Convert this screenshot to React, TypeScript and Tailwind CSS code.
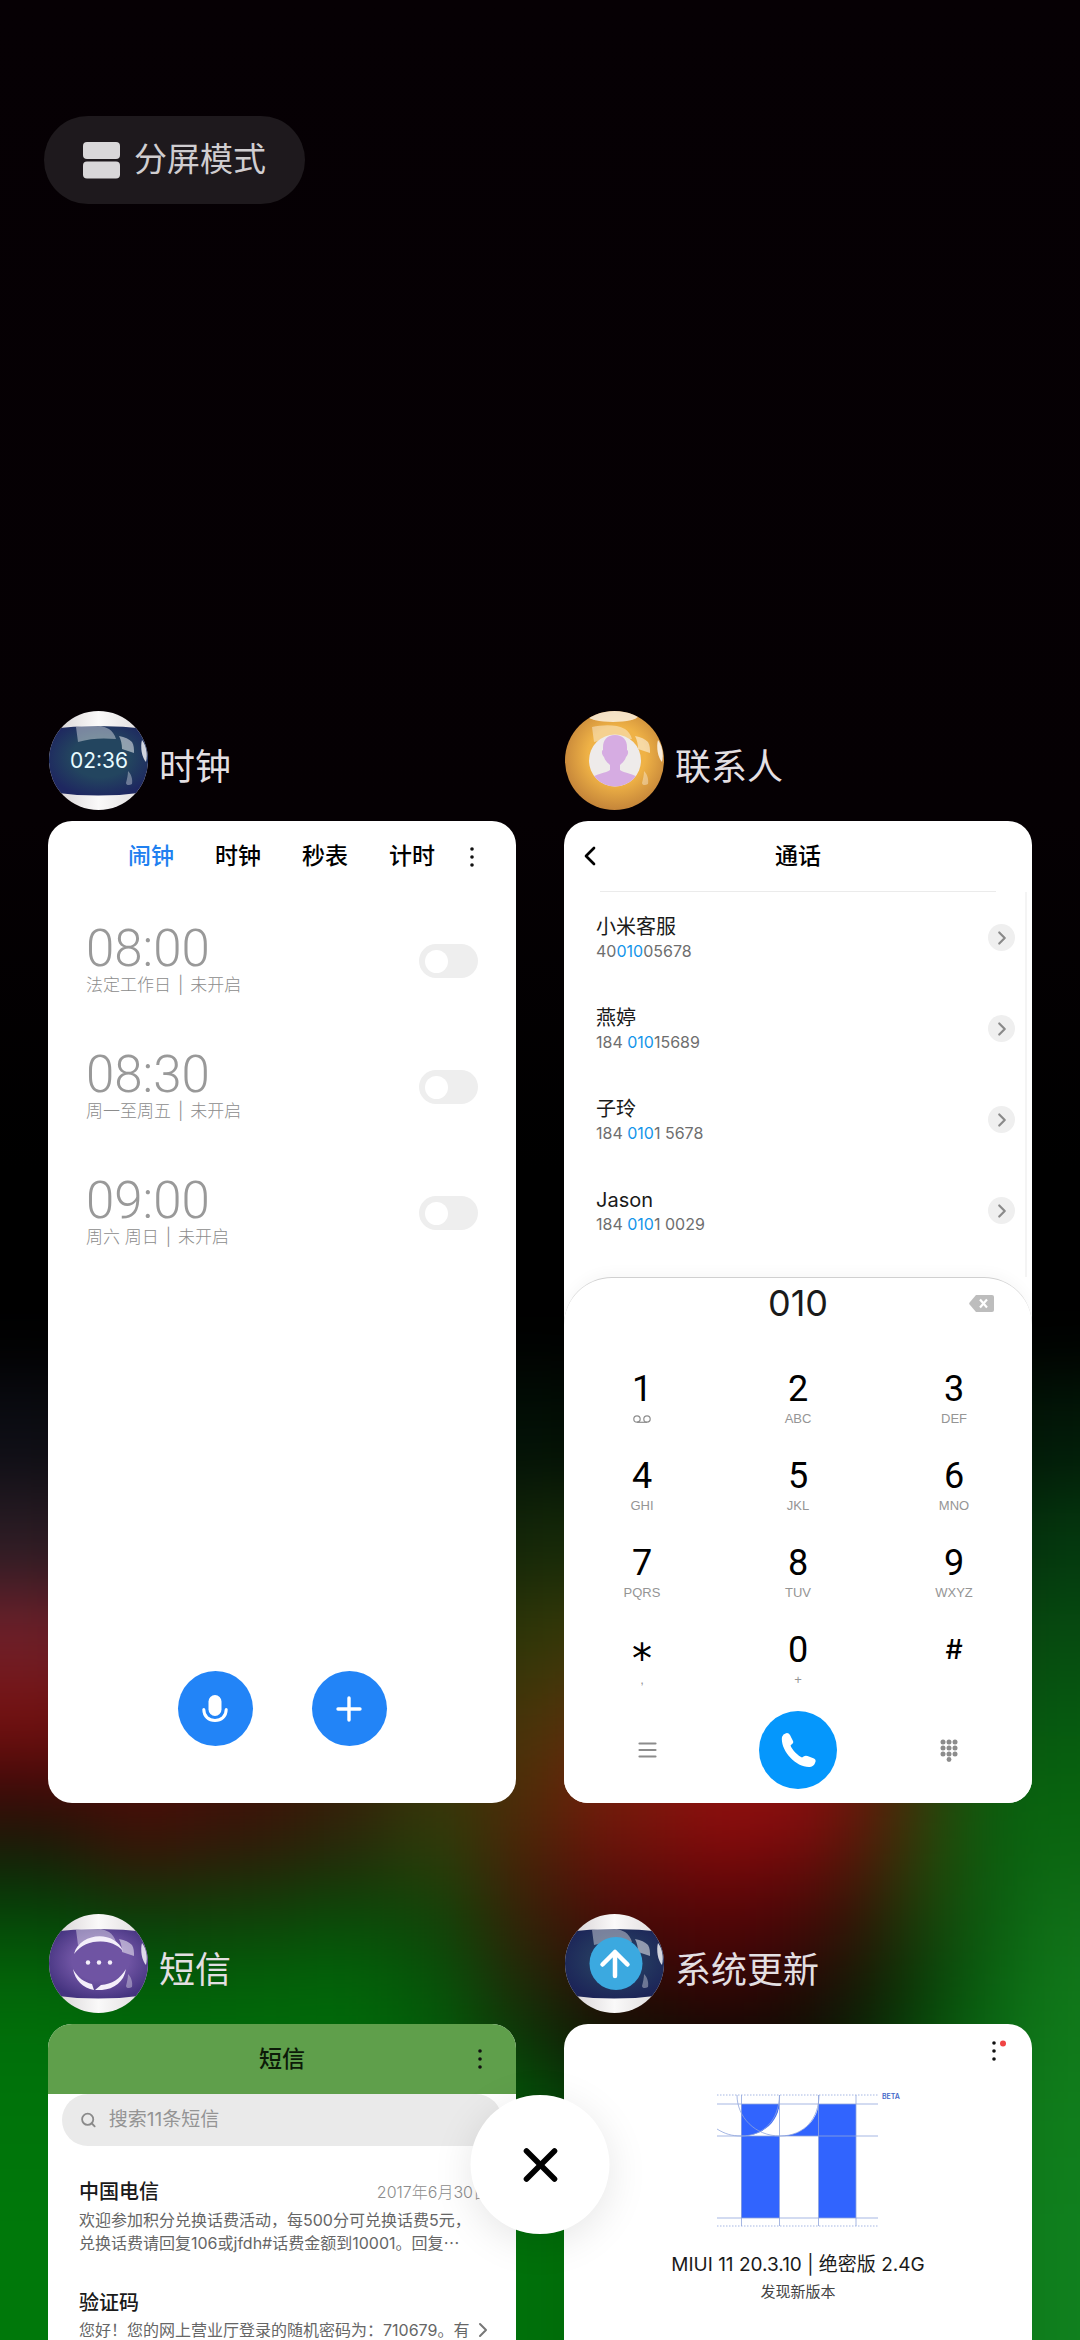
import type { ReactNode } from "react";
import { ChevronLeft, ChevronRight, Search, X } from "lucide-react";

type Alarm = { id: string; time: string; days: string };
type Contact = { name: string; number: [string, string, string] };
type Key = { digit: string; sub: ReactNode; className?: string };

const alarms: Alarm[] = [
  { id: "a1", time: "08:00", days: "法定工作日" },
  { id: "a2", time: "08:30", days: "周一至周五" },
  { id: "a3", time: "09:00", days: "周六 周日" },
];

const contacts: Contact[] = [
  { name: "小米客服", number: ["40", "010", "05678"] },
  { name: "燕婷", number: ["184 ", "010", "15689"] },
  { name: "子玲", number: ["184 ", "010", "1 5678"] },
  { name: "Jason", number: ["184 ", "010", "1 0029"] },
];

const keys: Key[] = [
  { digit: "1", sub: <VoicemailIcon /> },
  { digit: "2", sub: "ABC" },
  { digit: "3", sub: "DEF" },
  { digit: "4", sub: "GHI" },
  { digit: "5", sub: "JKL" },
  { digit: "6", sub: "MNO" },
  { digit: "7", sub: "PQRS" },
  { digit: "8", sub: "TUV" },
  { digit: "9", sub: "WXYZ" },
  { digit: "*", sub: ",", className: "h-10 font-['DejaVu_Sans'] text-[40px] leading-[58px] text-black" },
  { digit: "0", sub: "+" },
  { digit: "#", sub: "", className: "text-[27px] leading-10 font-medium text-black" },
];

// Wallpaper colours: column edges, then one row of colours per y edge
const wallX = [-300, 90, 200, 300, 390, 480, 570, 670, 770, 840, 900, 960, 1020, 1400];
const wallRows: [number, string[]][] = [
  [1380, ["#0c0d14", "#080808", "#050505", "#030503", "#020a04", "#021206", "#020a04", "#020502", "#020502", "#020502", "#020a04", "#021206", "#021a08"]],
  [1490, ["#2a1c24", "#201014", "#100808", "#080c04", "#0c1806", "#142808", "#142808", "#140c06", "#140806", "#100c06", "#081808", "#04280a", "#04380e"]],
  [1590, ["#70202a", "#5a181c", "#30100c", "#201008", "#202808", "#303808", "#3c3808", "#401c0a", "#401008", "#30180a", "#182c08", "#08400c", "#064c10"]],
  [1680, ["#76100f", "#5a0e0c", "#40100a", "#381408", "#382c08", "#48360a", "#602c0c", "#70180e", "#70100e", "#50180a", "#28340a", "#085010", "#065a10"]],
  [1760, ["#380808", "#480c08", "#401008", "#38200a", "#36380a", "#502c08", "#7c1a0c", "#94100f", "#900e10", "#601a0a", "#30400a", "#0a600e", "#08640e"]],
  [1830, ["#102208", "#301808", "#28200a", "#202c0a", "#283e0a", "#482008", "#64100a", "#76080a", "#6a0a0a", "#441c08", "#24440a", "#0a5c0e", "#0c6812"]],
  [1890, ["#044808", "#08400a", "#0c4408", "#084c08", "#0e4408", "#342008", "#480a08", "#500406", "#440808", "#281c06", "#18440a", "#0a5c10", "#107018"]],
  [1950, ["#036408", "#035c0a", "#03600a", "#02640a", "#06540a", "#202808", "#2c0c06", "#380606", "#240a06", "#141c06", "#084208", "#0a6010", "#107619"]],
  [2010, ["#00700a", "#006c08", "#006c08", "#006a08", "#035c08", "#0a3608", "#100e04", "#100604", "#0c0c04", "#082806", "#084e0a", "#0a6814", "#107a1a"]],
  [2080, ["#00740a", "#00740a", "#00700a", "#00700a", "#036408", "#035808", "#063808", "#062806", "#062806", "#083808", "#085a0c", "#0c7016", "#107e1c"]],
  [2180, ["#00780a", "#00780a", "#00780a", "#00780a", "#00740a", "#00700a", "#006808", "#006008", "#006008", "#006408", "#08680e", "#0c7618", "#10801e"]],
  [2700, []],
];

function Wallpaper() {
  return (
    <svg className="absolute inset-0 size-full" viewBox="0 0 1080 2340" preserveAspectRatio="none" aria-hidden="true">
      <defs>
        <linearGradient id="night" x1="0" y1="0" x2="0" y2="1">
          <stop offset="0" stopColor="#060004" />
          <stop offset="0.35" stopColor="#050003" />
          <stop offset="0.5" stopColor="#000" />
        </linearGradient>
        <filter id="soft" filterUnits="userSpaceOnUse" x="-300" y="1100" width="1700" height="1600" colorInterpolationFilters="sRGB">
          <feGaussianBlur stdDeviation="36" />
        </filter>
      </defs>
      <rect width="1080" height="2340" fill="url(#night)" />
      <g filter="url(#soft)">
        {wallRows.slice(0, -1).map(([y, colors], r) =>
          colors.map((c, i) => (
            <rect key={`${y}-${i}`} x={wallX[i]} y={y} width={wallX[i + 1] - wallX[i] + 1} height={wallRows[r + 1][0] - y + 1} fill={c} />
          ))
        )}
      </g>
    </svg>
  );
}

function Gloss() {
  return (
    <g fill="#fff">
      <path d="M27 16c10-2 24-3 33 2 3 2 6 6 7 10-12-1-25-1-38 3z" opacity="0.4" />
      <path d="M70 25c6 1 10 3 13 6 2 3 2 7 2 11l-12-4c0-5-1-9-3-13z" opacity="0.5" />
      <path d="M93 29c4 5 6 14 4 22-4-4-6-15-4-22z" opacity="0.8" />
      <path d="M79 60c3 3 5 8 4 13-3 2-6 1-6-1 1-4 2-8 2-12z" opacity="0.35" />
    </g>
  );
}

function Ball({ id, inner, outer, striped, children }: { id: string; inner: string; outer: string; striped?: boolean; children: ReactNode }) {
  return (
    <svg className="size-[99px] shrink-0" viewBox="0 0 99 99" aria-hidden="true">
      <defs>
        <clipPath id={`${id}-clip`}>
          <circle cx="49.5" cy="49.5" r="49.5" />
        </clipPath>
        <radialGradient id={`${id}-fill`} cx="0.52" cy="0.45" r="0.58">
          <stop offset="0" stopColor={inner} />
          <stop offset="0.5" stopColor={inner} />
          <stop offset="1" stopColor={outer} />
        </radialGradient>
        <linearGradient id={`${id}-cap`} x1="0" y1="0" x2="1" y2="0">
          <stop offset="0.1" stopColor="#dad6d8" />
          <stop offset="0.5" stopColor="#faf9f9" />
          <stop offset="0.9" stopColor="#e2dfe0" />
        </linearGradient>
      </defs>
      <g clipPath={`url(#${id}-clip)`}>
        <rect width="99" height="99" fill={striped ? `url(#${id}-cap)` : `url(#${id}-fill)`} />
        {striped ? (
          <path d="M0 18Q49 12 99 18V81Q49 88 0 81z" fill={`url(#${id}-fill)`} />
        ) : (
          <ellipse cx="48" cy="5" rx="25" ry="6" fill="#fff" opacity="0.7" />
        )}
        <Gloss />
        {children}
      </g>
    </svg>
  );
}

function ClockBall() {
  return (
    <Ball id="clock" inner="#23455f" outer="#1e2760" striped>
      <text x="50" y="57" textAnchor="middle" fontFamily="Inter, sans-serif" fontSize="21" fill="#e8fbff">
        02:36
      </text>
    </Ball>
  );
}

function ContactsBall() {
  return (
    <Ball id="contacts" inner="#efb246" outer="#c08038">
      <clipPath id="face">
        <circle cx="50" cy="49.5" r="26" />
      </clipPath>
      <circle cx="50" cy="49.5" r="26" fill="#eeebea" />
      <g clipPath="url(#face)" fill="#d6ace2">
        <path d="M50 24c-8 0-12 5-12 12v3c-2 1-1 5 1 7 1 4 4 6 6 8v5c-3 3-16 4-20 9v12h50V68c-4-5-17-6-20-9v-5c2-2 5-4 6-8 2-2 3-6 1-7v-3c0-7-4-12-12-12z" />
      </g>
    </Ball>
  );
}

function MessagesBall() {
  return (
    <Ball id="messages" inner="#6f54a3" outer="#453480" striped>
      <g fill="#f4effa">
        <path d="M25 40C31 18 66 16 74 37 63 24 38 23 25 40z" />
        <path d="M24 55c5 9 11 13 19 15l2 6c-11-2-19-10-21-21zM52 71c11-1 19-6 25-16-2 13-12 20-24 21h-7z" />
        <circle cx="39" cy="48.5" r="2.2" />
        <circle cx="50" cy="48.5" r="2.2" />
        <circle cx="61" cy="48.5" r="2.2" />
      </g>
    </Ball>
  );
}

function UpdateBall() {
  return (
    <Ball id="update" inner="#24385f" outer="#1c2558" striped>
      <circle cx="51" cy="49.5" r="26.5" fill="#3ba9e0" />
      <path d="M50 62V38M37.5 50.5L50 38l12.5 12.5" fill="none" stroke="#fff" strokeWidth="4.5" strokeLinecap="round" strokeLinejoin="round" />
    </Ball>
  );
}

function VoicemailIcon() {
  return (
    <svg className="h-[10px] w-[20px]" viewBox="0 0 20 10" fill="none" stroke="#8e8e8e" strokeWidth="1.2" aria-hidden="true">
      <circle cx="5" cy="5" r="3.2" />
      <circle cx="15" cy="5" r="3.2" />
      <path d="M5 8.3h10" />
    </svg>
  );
}

function MoreIcon({ alert }: { alert?: boolean }) {
  return (
    <svg className="h-6 w-6" viewBox="0 0 24 24" fill="#111" aria-hidden="true">
      <circle cx="12" cy="4" r="1.8" />
      <circle cx="12" cy="12" r="1.8" />
      <circle cx="12" cy="20" r="1.8" />
      {alert && <circle cx="21" cy="4.5" r="3" fill="#f04444" />}
    </svg>
  );
}

function DeleteIcon() {
  return (
    <svg className="h-[17px] w-[25px]" viewBox="0 0 25 17" aria-hidden="true">
      <path d="M7 0h16q2 0 2 2v13q0 2-2 2H7L.6 9.5q-.8-1 0-2z" fill="#bdbdbd" />
      <path d="M11 4.5l7 8M18 4.500l-7 8" stroke="#fff" strokeWidth="2.2" />
    </svg>
  );
}

function LogoEleven() {
  return (
    <svg className="h-[136px] w-[186px] overflow-visible" viewBox="0 0 186 136" aria-label="MIUI 11">
      <g fill="#3164fe">
        <path d="M24 11h38.5C61 29 46 43 24 43z" />
        <path d="M24 43h38.5v82H24z" />
        <path d="M101.5 11H139v114h-37.5V43H64c20 0 36-14 37.500-32z" />
      </g>
      <g stroke="#8fa4dc" fill="none" strokeWidth="0.8">
        <path d="M0 11h161M0 43h161M0 125h161M24.5 2v131M62.5 2v131M101.5 2v131M139 2v131" />
        <path d="M20 2c0 22 18 41 43 41s39-18 39-41M0 36c8 5 15 7 24 7 23 0 38-16 38.5-41" />
        <path d="M0 2h161M0 133h161" strokeDasharray="1.5 1.5" />
      </g>
      <text x="165" y="6" fontFamily="Inter, sans-serif" fontSize="7" fontWeight="600" fill="#4468c8">
        BETA
      </text>
    </svg>
  );
}

function Task({ icon, title, children }: { icon: ReactNode; title: string; children: ReactNode }) {
  return (
    <section>
      <div className="mb-[11px] flex items-center gap-[11px] pl-px">
        {icon}
        <h2 className="pt-3 text-4xl leading-10 font-normal text-[#e3dfe2]">{title}</h2>
      </div>
      <div className="flex h-[982px] flex-col overflow-hidden rounded-3xl bg-white">{children}</div>
    </section>
  );
}

function ClockCard() {
  return (
    <>
      <div className="flex h-[71px] items-center gap-[41px] pl-20 text-[23px] font-medium text-black">
        <button className="text-[#2080f0]">闹钟</button>
        <button>时钟</button>
        <button>秒表</button>
        <button>计时</button>
        <button className="-ml-4" aria-label="更多">
          <MoreIcon />
        </button>
      </div>
      <ul className="pt-[6px]">
        {alarms.map((a) => (
          <li key={a.id} className="flex h-[126px] items-center justify-between px-[38px] text-[#8c8c8c]">
            <label htmlFor={a.id} className="pb-[3px]">
              <span className="block font-['Roboto'] text-[51px] leading-[52px] font-light text-[#999]">{a.time}</span>
              <span className="block text-[17px] leading-[21px] font-light">
                {a.days}
                <span className="mx-[7px]">|</span>
                未开启
              </span>
            </label>
            <input
              id={a.id}
              type="checkbox"
              role="switch"
              className="flex h-[34px] w-[59px] appearance-none items-center rounded-full bg-[#eeeeee] pl-[6px] before:size-[23px] before:rounded-full before:bg-white checked:bg-[#2080f0]"
            />
          </li>
        ))}
      </ul>
      <div className="mt-auto mb-[57px] flex justify-center gap-[59px]">
        <button className="flex size-[75px] items-center justify-center rounded-full bg-[#2284f7]" aria-label="语音">
          <svg className="h-7 w-[26px]" viewBox="0 0 26 28" fill="none" aria-hidden="true">
            <rect x="6.5" y="0" width="13" height="21" rx="6.5" fill="#fff" />
            <path d="M1.8 14.5c0 7 5 11 11.2 11s11.2-4 11.2-11" stroke="#fff" strokeWidth="3" strokeLinecap="round" />
          </svg>
        </button>
        <button className="flex size-[75px] items-center justify-center rounded-full bg-[#2284f7]" aria-label="添加闹钟">
          <svg className="size-[26px]" viewBox="0 0 26 26" stroke="#fff" strokeWidth="3.4" strokeLinecap="round" aria-hidden="true">
            <path d="M13 2v22M2 13h22" />
          </svg>
        </button>
      </div>
    </>
  );
}

function ContactsCard() {
  return (
    <>
      <div className="mx-9 grid h-[71px] grid-cols-3 items-center border-b border-[#ebebeb]">
        <button className="-ml-[26px] justify-self-start" aria-label="返回">
          <ChevronLeft className="size-8 text-black" strokeWidth={2} />
        </button>
        <h3 className="text-center text-[23px] font-medium">通话</h3>
      </div>
      <ul className="mr-[5px] flex-1 border-r-2 border-[#f4f4f4]">
        {contacts.map((c) => (
          <li key={c.name} className="flex h-[91px] items-center justify-between pr-[10px] pl-8">
            <div>
              <p className="text-xl leading-[26px] text-[#1a1a1a]">{c.name}</p>
              <p className="text-base leading-[22px] whitespace-pre text-[#6e6e6e]">
                {c.number[0]}
                <span className="text-[#1495ea]">{c.number[1]}</span>
                {c.number[2]}
              </p>
            </div>
            <button className="flex size-[27px] items-center justify-center rounded-full bg-[#efefef]" aria-label={`${c.name} 详情`}>
              <ChevronRight className="size-[22px] text-[#8a8a8a]" strokeWidth={2.4} />
            </button>
          </li>
        ))}
      </ul>
      <div className="rounded-t-[48px] border-t border-[#d0d0d0] bg-white shadow-[0_-4px_14px_rgba(0,0,0,0.03)]">
        <div className="grid h-[50px] grid-cols-3 items-center px-9">
          <output className="col-start-2 text-center text-4xl text-[#1a1a1a]">010</output>
          <button className="justify-self-end pr-0.5" aria-label="删除">
            <DeleteIcon />
          </button>
        </div>
        <div className="grid grid-cols-3 gap-y-[27px] pt-[41px]">
          {keys.map((k) => (
            <button key={k.digit} className="flex h-[60px] flex-col items-center">
              <span className={k.className ?? "font-['Roboto'] text-4xl leading-10 text-black"}>{k.digit}</span>
              <span className="flex h-5 items-center font-['Liberation_Sans'] text-[13px] leading-5 text-[#959595]">{k.sub}</span>
            </button>
          ))}
        </div>
        <div className="mt-[21px] mb-[14px] grid grid-cols-3 place-items-center px-2">
          <button aria-label="菜单">
            <svg className="h-[18px] w-[19px]" viewBox="0 0 19 18" stroke="#8c8c8c" strokeWidth="2.2" strokeLinecap="round" aria-hidden="true">
              <path d="M1.5 2.5h16M1.5 9h16M1.5 15.5h16" />
            </svg>
          </button>
          <button className="flex size-[78px] items-center justify-center rounded-full bg-[#0597fc]" aria-label="拨打">
            <svg className="size-9" viewBox="0 0 36 36" fill="#fff" aria-hidden="true">
              <path d="M2 5Q3 2 6 1.200Q8.500.5 10 3l3 6q.8 2-1 3l-1.500 1.600c1.500 4.500 8 10.500 11.500 12l2-1.300q1.500-.9 3.500-.2l6.500 2.500q2.400 1.200 1.300 3.600Q34 34.500 30 35C16 36 0 18 2 5z" />
            </svg>
          </button>
          <button aria-label="键盘">
            <svg className="h-[23px] w-[18px]" viewBox="0 0 18 23" fill="#8c8c8c" aria-hidden="true">
              {[3, 9, 15].map((y) => [3, 9, 15].map((x) => <circle key={`${x}-${y}`} cx={x} cy={y} r="2.5" />))}
              <circle cx="9" cy="20.5" r="2.4" />
            </svg>
          </button>
        </div>
      </div>
    </>
  );
}

function MessagesCard() {
  return (
    <>
      <div className="grid h-[70px] shrink-0 grid-cols-3 items-center bg-[#5f9f4b] px-6">
        <h3 className="col-start-2 text-center text-[23px] font-medium text-[#0c1a08]">短信</h3>
        <button className="justify-self-end" aria-label="更多">
          <MoreIcon />
        </button>
      </div>
      <label className="mx-[14px] flex h-[52px] shrink-0 items-center gap-3 rounded-full bg-[#eaeaea] pl-[18px]">
        <Search className="size-[18px] text-[#8a8a8a]" strokeWidth={2.6} />
        <input type="text" aria-label="搜索短信" placeholder="搜索11条短信" className="w-full bg-transparent text-[19px] placeholder:text-[#949494]" />
      </label>
      <ul className="space-y-[35px] pt-8 pr-[27px] pl-[31px] text-base leading-[22px] text-[#666]">
        <li>
          <div className="mb-[3px] flex h-7 items-center justify-between">
            <h4 className="text-xl font-medium text-[#1a1a1a]">中国电信</h4>
            <time className="font-light text-[#8c8c8c]">2017年6月30日</time>
          </div>
          <p className="whitespace-nowrap">
            欢迎参加积分兑换话费活动，每500分可兑换话费5元，
            <br />
            兑换话费请回复106或jfdh#话费金额到10001。回复
            <span className="font-['Noto_Sans_CJK_SC']">…</span>
          </p>
        </li>
        <li>
          <h4 className="mb-0.5 text-xl leading-7 font-medium text-[#1a1a1a]">验证码</h4>
          <div className="flex h-[22px] items-center justify-between">
            <p className="whitespace-nowrap">您好！您的网上营业厅登录的随机密码为：710679。有</p>
            <ChevronRight className="-mr-1.5 size-6 shrink-0 text-[#777]" />
          </div>
        </li>
      </ul>
    </>
  );
}

function UpdateCard() {
  return (
    <div className="flex flex-col items-center">
      <button className="mt-[15px] mr-[26px] self-end" aria-label="更多">
        <MoreIcon alert />
      </button>
      <div className="mt-[30px] pl-6">
        <LogoEleven />
      </div>
      <h3 className="mt-[22px] text-[19px] leading-7 text-[#1a1a1a]">MIUI 11 20.3.10 | 绝密版 2.4G</h3>
      <p className="text-[15px] leading-[26px] text-[#444]">发现新版本</p>
    </div>
  );
}

export default function App() {
  return (
    <main className="relative h-screen overflow-hidden bg-black font-['Inter','Noto_Sans_CJK_SC',sans-serif]">
      <Wallpaper />
      <div className="relative">
        <header className="px-11 pt-[116px]">
          <button className="flex h-[88px] items-center gap-[14px] rounded-full bg-[#1e191d] pr-[39px] pl-[39px] text-[33px] text-[#d0cdd0]">
            <svg className="size-[37px]" viewBox="0 0 37 37" fill="#d9d7d9" aria-hidden="true">
              <rect width="37" height="17" rx="4" />
              <rect y="19.5" width="37" height="17" rx="4" />
            </svg>
            分屏模式
          </button>
        </header>
        <div className="mt-[507px] grid grid-cols-2 gap-x-12 gap-y-[111px] px-12">
          <Task icon={<ClockBall />} title="时钟">
            <ClockCard />
          </Task>
          <Task icon={<ContactsBall />} title="联系人">
            <ContactsCard />
          </Task>
          <Task icon={<MessagesBall />} title="短信">
            <MessagesCard />
          </Task>
          <Task icon={<UpdateBall />} title="系统更新">
            <UpdateCard />
          </Task>
        </div>
      </div>
      <button
        className="absolute bottom-[106px] left-1/2 flex size-[139px] -translate-x-1/2 items-center justify-center rounded-full bg-white shadow-[0_8px_40px_rgba(0,0,0,0.1)]"
        aria-label="全部清除"
      >
        <X className="size-14 text-black" strokeWidth={2.4} />
      </button>
    </main>
  );
}
